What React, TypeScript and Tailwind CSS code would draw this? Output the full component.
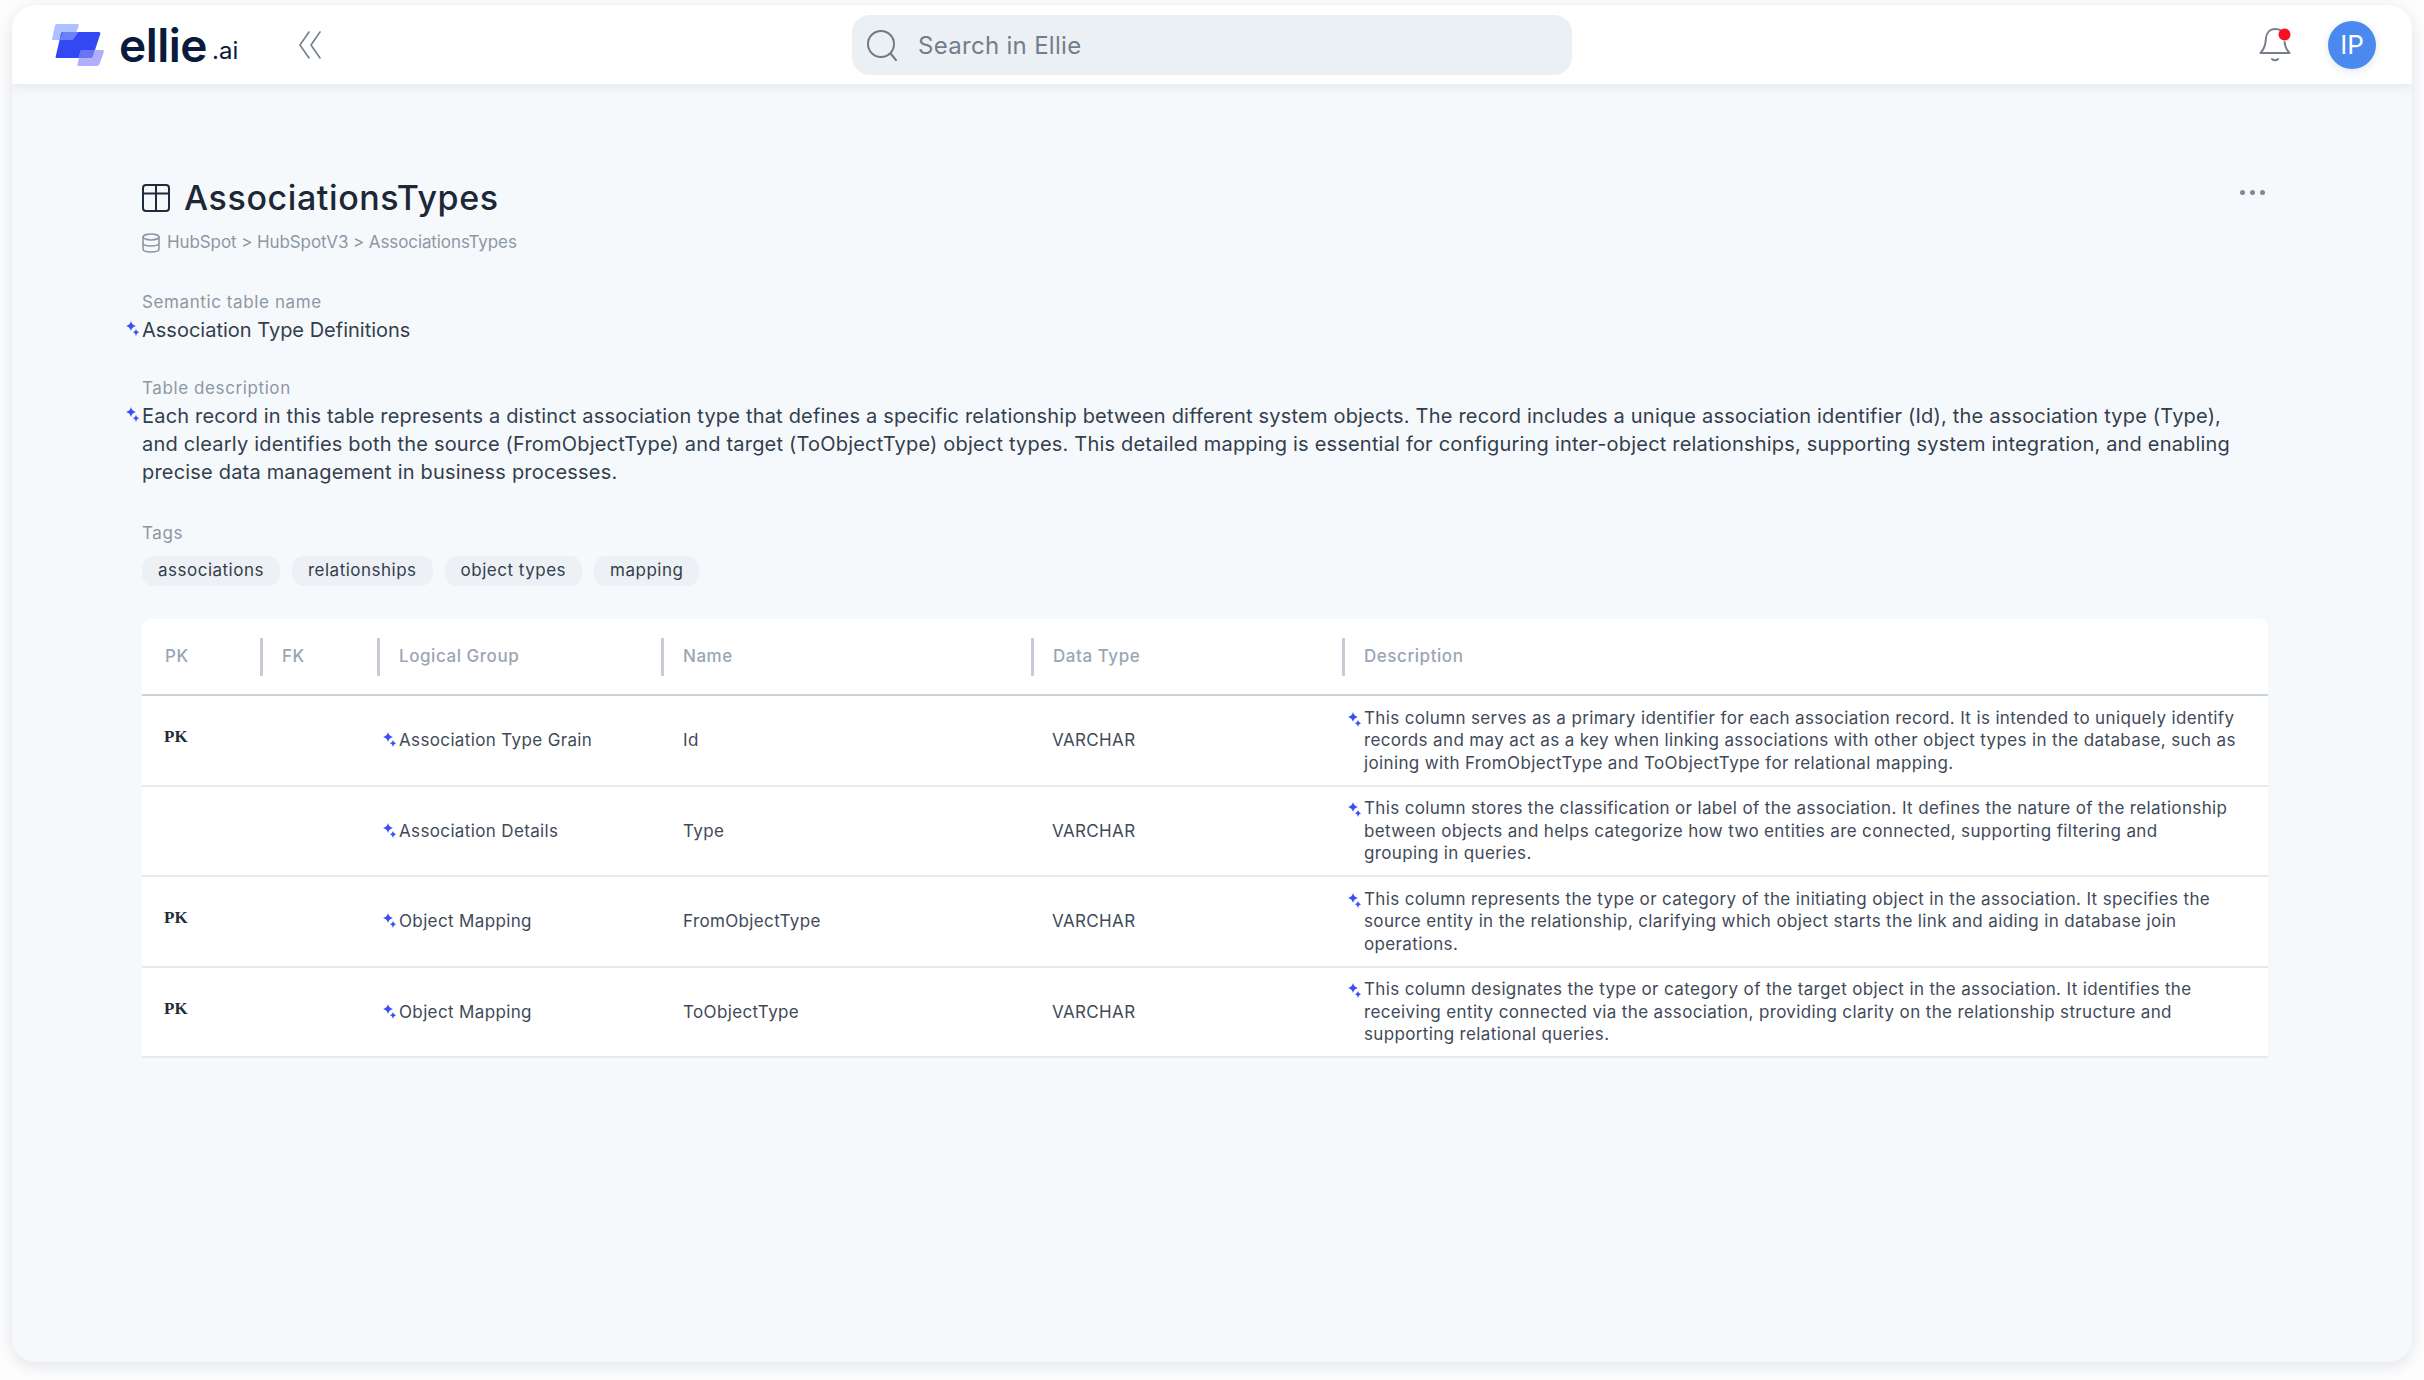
import React from 'react';

interface Column {
  pk: boolean;
  group: string;
  name: string;
  type: string;
  description: string;
}

const rows: Column[] = [
  {
    pk: true,
    group: 'Association Type Grain',
    name: 'Id',
    type: 'VARCHAR',
    description:
      'This column serves as a primary identifier for each association record. It is intended to uniquely identify records and may act as a key when linking associations with other object types in the database, such as joining with FromObjectType and ToObjectType for relational mapping.',
  },
  {
    pk: false,
    group: 'Association Details',
    name: 'Type',
    type: 'VARCHAR',
    description:
      'This column stores the classification or label of the association. It defines the nature of the relationship between objects and helps categorize how two entities are connected, supporting filtering and grouping in queries.',
  },
  {
    pk: true,
    group: 'Object Mapping',
    name: 'FromObjectType',
    type: 'VARCHAR',
    description:
      'This column represents the type or category of the initiating object in the association. It specifies the source entity in the relationship, clarifying which object starts the link and aiding in database join operations.',
  },
  {
    pk: true,
    group: 'Object Mapping',
    name: 'ToObjectType',
    type: 'VARCHAR',
    description:
      'This column designates the type or category of the target object in the association. It identifies the receiving entity connected via the association, providing clarity on the relationship structure and supporting relational queries.',
  },
];

const tags = ['associations', 'relationships', 'object types', 'mapping'];

const Sparkle: React.FC<{ className?: string }> = ({ className }) => (
  <svg viewBox="0 0 13 15" className={className} fill="#3b4ef6">
    <path d="M5 0 Q5.8 3.9 10 5 Q5.8 6.1 5 10 Q4.2 6.1 0 5 Q4.2 3.9 5 0Z" />
    <path d="M10 8 Q10.4 10.4 13 11.2 Q10.4 12 10 15 Q9.6 12 7 11.2 Q9.6 10.4 10 8Z" />
  </svg>
);

const Logo = () => (
  <svg viewBox="0 0 52 42" className="w-[52px] h-[42px] shrink-0">
    <path d="M4.5 0 H25 Q27.5 0 26.6 2.2 L22 14.5 Q21.2 16 19 16 H1.4 Q-0.6 16 0.2 14 L3 1.5 Q3.4 0 4.5 0Z" fill="#adc0ff" />
    <path d="M11 8 H46.5 Q49 8 48.2 10.2 L41 32 Q40.4 34 38 34 H5 Q3 34 3.8 32 L9 9.8 Q9.4 8 11 8Z" fill="#3347f5" />
    <path d="M30 26 H50 Q52.4 26 51.8 28 L47.6 40 Q47 42 44.6 42 H27 Q24.8 42 25.6 40 L28.4 27.6 Q28.8 26 30 26Z" fill="#a7a5ff" fillOpacity="0.9" />
    <path d="M11 8 H26.4 L22 14.5 Q21.2 16 19 16 H7.5 Z" fill="#6c80fa" />
    <path d="M28.4 27.6 Q28.8 26 30 26 H42.5 L41 32 Q40.4 34 38 34 H26.4 Z" fill="#6a74f0" />
  </svg>
);

const App: React.FC = () => {
  return (
    <div className="w-[2424px] h-[1380px] overflow-hidden bg-[#fdfdfe] pt-[5px] px-3 font-['Inter',sans-serif]">
      <div className="h-[1357px] rounded-[24px] bg-[#f6f9fc] shadow-[0_4px_16px_rgba(60,72,88,0.14)] overflow-hidden">
        {/* Top bar */}
        <header className="relative h-[79px] bg-white flex items-center justify-between pl-10 pr-[36px] shadow-[0_3px_10px_rgba(60,72,88,0.1)]">
          <div className="flex items-center">
            <Logo />
            <span className="ml-[15px] text-[46px] leading-none font-semibold text-[#0a1b3d] tracking-[-0.5px]">ellie</span>
            <span className="ml-[5px] mt-[12px] text-[24px] leading-none font-normal text-[#0a1b3d]">.ai</span>
            <svg viewBox="0 0 22 28" className="ml-[61px] w-[22px] h-[28px]" fill="none" stroke="#76808c" strokeWidth="1.6" strokeLinecap="round" strokeLinejoin="round">
              <path d="M10 1 L1 14 L10 27" />
              <path d="M21 1 L12 14 L21 27" />
            </svg>
          </div>

          <div className="absolute left-[840px] top-[10px] w-[720px] h-[60px] rounded-[18px] bg-[#ebf0f4] flex items-center pl-[15px]">
            <svg viewBox="0 0 30 31" className="w-[30px] h-[31px]" fill="none" stroke="#6f7a87" strokeWidth="2" strokeLinecap="round">
              <circle cx="14" cy="14" r="13" />
              <path d="M23.5 23.5 L29 30" />
            </svg>
            <span className="ml-[21px] mt-[1px] text-[24px] tracking-[0.3px] text-[#737e8b]">Search in Ellie</span>
          </div>

          <div className="flex items-center">
            <svg viewBox="0 0 32 34" className="w-[32px] h-[34px] mt-[1px]" fill="none" stroke="#76808c" strokeWidth="2" strokeLinecap="round" strokeLinejoin="round">
              <path d="M22 2.6 C20.6 1.6 18.4 1 16 1 C10.6 1 7.5 5 7 10 C6.4 16 6 20 1.5 25 H30.5 C27.5 22 26 19 25.5 14" />
              <path d="M13 31 C14.5 32.6 17.5 32.6 19 31" />
              <circle cx="25.5" cy="6.5" r="6" fill="#fb0f23" stroke="none" />
            </svg>
            <div className="ml-[37px] w-[48px] h-[48px] rounded-full bg-[#4a8af0] text-white flex items-center justify-center text-[26px] shadow-[0_2px_8px_rgba(60,72,88,0.15)]">
              IP
            </div>
          </div>
        </header>

        {/* Table details */}
        <main className="pl-[130px] pr-[144px]">
          <div className="mt-[100px] flex justify-between">
            <div className="flex items-center gap-[14px]">
              <svg viewBox="0 0 28 28" className="w-[28px] h-[28px]" fill="none" stroke="#1f2a3a" strokeWidth="2">
                <rect x="1" y="1" width="26" height="26" rx="3" />
                <path d="M1 9.5 H27 M14 1 V27" />
              </svg>
              <h1 className="text-[34px] leading-[28px] font-medium text-[#1d2735] tracking-[0.6px]">AssociationsTypes</h1>
            </div>
            <div className="flex gap-[5px] mt-[6px] mr-[3px] h-[5px]">
              <div className="w-[5px] h-[5px] rounded-full bg-[#7f8a96]" />
              <div className="w-[5px] h-[5px] rounded-full bg-[#7f8a96]" />
              <div className="w-[5px] h-[5px] rounded-full bg-[#7f8a96]" />
            </div>
          </div>

          <div className="mt-[21px] flex items-center h-[20px] text-[17px] tracking-[-0.1px] text-[#8d97a3]">
            <svg viewBox="0 0 18 20" className="w-[18px] h-[20px]" fill="none" stroke="#8d97a3" strokeWidth="1.6">
              <ellipse cx="9" cy="4" rx="8" ry="3" />
              <path d="M1 4 V16 C1 18 4.5 19 9 19 C13.5 19 17 18 17 16 V4 M1 10 C1 12 4.5 13 9 13 C13.5 13 17 12 17 10" />
            </svg>
            <span className="ml-[7px]">HubSpot &gt; HubSpotV3 &gt; AssociationsTypes</span>
          </div>

          <div className="mt-[37px] text-[17px] leading-[24px] tracking-[0.6px] text-[#8d97a3]">Semantic table name</div>
          <div className="relative mt-[2px] text-[20px] leading-[28px] text-[#333e4d]">
            <Sparkle className="absolute left-[-16px] top-[5px] w-[13px] h-[15px]" />
            Association Type Definitions
          </div>

          <div className="mt-[32px] text-[17px] leading-[24px] tracking-[0.6px] text-[#8d97a3]">Table description</div>
          <div className="relative mt-[2px] pr-[20px] text-[20px] leading-[28px] text-[#333e4d] tracking-[0.19px]">
            <Sparkle className="absolute left-[-16px] top-[5px] w-[13px] h-[15px]" />
            Each record in this table represents a distinct association type that defines a specific relationship between different system objects. The record includes a unique association identifier (Id), the association type (Type), and clearly identifies both the source (FromObjectType) and target (ToObjectType) object types. This detailed mapping is essential for configuring inter-object relationships, supporting system integration, and enabling precise data management in business processes.
          </div>

          <div className="mt-[35px] text-[17px] leading-[24px] tracking-[0.6px] text-[#8d97a3]">Tags</div>
          <div className="mt-[11px] flex gap-[12px]">
            {tags.map((tag) => (
              <span key={tag} className="h-[30px] px-[16px] rounded-[12px] bg-[#edf1f5] flex items-center text-[17px] tracking-[0.5px] text-[#333e4d]">
                {tag}
              </span>
            ))}
          </div>

          {/* Columns */}
          <div className="mt-[33px] bg-white rounded-t-[8px]">
            <div className="grid grid-cols-[118px_117px_284px_370px_311px_926px] h-[77px] items-center border-b-2 border-[#ccd3da] text-[17px] font-medium tracking-[0.55px] text-[#9aa6b4]">
              <div className="pl-[23px]">PK</div>
              {['FK', 'Logical Group', 'Name', 'Data Type', 'Description'].map((label) => (
                <div key={label} className="h-[38px] flex items-center border-l-[3px] border-[#c6cdd5] pl-[19px]">
                  {label}
                </div>
              ))}
            </div>
            {rows.map((row) => (
              <div key={row.name} className="grid grid-cols-[118px_117px_284px_370px_311px_926px] h-[90.6px] items-center border-b-2 border-[#e6e9ed] text-[17px] leading-[22.5px] tracking-[0.36px] text-[#3f4a59]">
                <div className="pl-[22px] mb-[6px] font-['Liberation_Serif',serif] font-bold text-[17px] tracking-normal text-[#222b36]">
                  {row.pk ? 'PK' : ''}
                </div>
                <div />
                <div className="relative pl-[22px]">
                  <Sparkle className="absolute left-[6px] top-[3px] w-[13px] h-[15px]" />
                  {row.group}
                </div>
                <div className="pl-[22px]">{row.name}</div>
                <div className="pl-[21px]">{row.type}</div>
                <div className="relative pl-[22px] pr-[31px]">
                  <Sparkle className="absolute left-[6px] top-[5px] w-[13px] h-[15px]" />
                  {row.description}
                </div>
              </div>
            ))}
          </div>
        </main>
      </div>
    </div>
  );
};

export default App;
